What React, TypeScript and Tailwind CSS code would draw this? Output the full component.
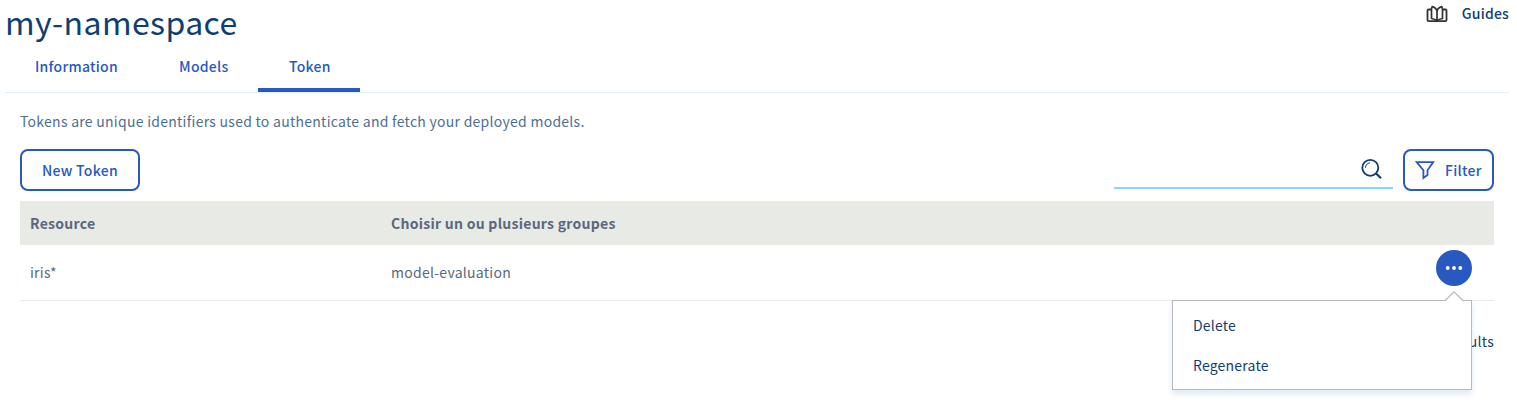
const tabs = [
  { label: 'Information', size: 'w-[143px] pl-[30px]', active: false },
  { label: 'Models', size: 'w-[110px] pl-[31px]', active: false },
  { label: 'Token', size: 'w-[102px] pl-[31px]', active: true },
];

function BookIcon() {
  return (
    <svg className="mt-px" width="22" height="18" viewBox="0 0 22 18" fill="none" stroke="#333" strokeWidth="1.8" strokeLinejoin="round">
      <path d="M5.500 4.500H2.600c-.7 0-1.100.4-1.100 1.100v9.500c0 .7.4 1.100 1.100 1.100h16.800c.7 0 1.100-.4 1.100-1.100v-9.500c0-.7-.4-1.100-1.100-1.100h-2.900" />
      <path d="M11 16.200V7c0-2.300-1.800-4.500-4.600-5.400-.5.700-.9 1.900-.9 2.900v9c2.500.3 4.300 1.200 5.500 2.700ZM11 16.200V7c0-2.300 1.800-4.500 4.600-5.400.5.700.9 1.900.9 2.900v9c-2.500.3-4.300 1.200-5.500 2.700Z" strokeWidth="1.700" />
    </svg>
  );
}

function SearchIcon() {
  return (
    <svg width="22" height="22" viewBox="0 0 22 22" fill="none" stroke="#0f3e70">
      <circle cx="10.300" cy="9.800" r="8" strokeWidth="1.800" />
      <path d="M5.500 9.700C5.500 7.200 7.300 5 10 4.900" strokeWidth="1" />
      <path d="M15.800 15.300l5.200 5" strokeWidth="2.200" />
    </svg>
  );
}

function FilterIcon() {
  return (
    <svg width="20" height="20" viewBox="0 0 20 20" fill="none" stroke="#2859c0" strokeWidth="1.800">
      <path d="M1.700 2.100h16.600l-5.800 8.100v4.800l-4.100 3v-7.800Z" />
    </svg>
  );
}

function Menu() {
  return (
    <div className="absolute top-[50px] right-0 h-[90px] w-[300px] border border-[#b8b9bb] bg-white pt-1 tracking-[0.2px] shadow-[0_4px_6px_rgba(40,110,192,0.15)]">
      <svg className="absolute -top-[10px] right-[7px]" width="20" height="11" viewBox="0 0 20 11">
        <path d="M1 11V10L10 1l9 9v1Z" fill="#fff" />
        <path d="M1 9.700L10 .9l9 8.800" fill="none" stroke="#b8b9bb" strokeWidth="1.200" />
      </svg>
      <button className="block h-10 w-full pl-5 text-left leading-10">Delete</button>
      <button className="block h-10 w-full pl-5 text-left leading-10">Regenerate</button>
    </div>
  );
}

export default function App() {
  return (
    <div className="h-[410px] w-full bg-white pr-2 pl-[5px] font-['Noto_Sans_CJK_SC',sans-serif] text-[14px] leading-6 tracking-[0.27px] text-[#0f3e70]">
      <header className="flex h-[46px] items-start justify-between">
        <h1 className="text-[32px] leading-[42px] tracking-[0.4px]">my-namespace</h1>
        <a className="flex items-center gap-[14px] pt-px font-medium tracking-[0.2px]">
          <BookIcon />
          Guides
        </a>
      </header>
      <nav className="flex h-[47px] border-b border-[#def1fb] font-medium text-[#2859c0]">
        {tabs.map((tab) => (
          <a
            key={tab.label}
            className={`${tab.size} h-[46px] border-b-4 leading-10 ${tab.active ? 'border-[#2859c0]' : 'border-transparent'}`}
          >
            {tab.label}
          </a>
        ))}
      </nav>
      <main className="pr-[15px] pl-[15px]">
        <p className="h-14 pt-4 text-[#4d7092]">
          Tokens are unique identifiers used to authenticate and fetch your deployed models.
        </p>
        <div className="flex h-[52px] items-start justify-between font-medium text-[#2859c0]">
          <button className="h-[42px] w-[120px] rounded-lg border-2 border-[#2859c0]">New Token</button>
          <div className="flex gap-[10px]">
            <div className="flex h-10 w-[279px] justify-end border-b-2 border-[#85d9fd] pt-[9px] pr-[11px]">
              <SearchIcon />
            </div>
            <button className="flex h-[42px] w-[91px] items-center gap-[10px] rounded-lg border-2 border-[#2859c0] pl-[10px]">
              <FilterIcon />
              Filter
            </button>
          </div>
        </div>
        <div className="grid h-11 grid-cols-[361px_1fr] items-center bg-[#e8eae5] pl-[10px] font-bold text-[#59687e]">
          <span>Resource</span>
          <span>Choisir un ou plusieurs groupes</span>
        </div>
        <div className="grid h-14 grid-cols-[361px_1fr_36px] border-b border-[#e8eae5] pr-[22px] pl-[10px] leading-[55px] text-[#59687e]">
          <span>iris*</span>
          <span>model-evaluation</span>
          <div className="relative mt-[5px] h-9 leading-6 text-[#0f3e70]">
            <button className="flex size-9 items-center justify-center rounded-full bg-[#2859c0]">
              <svg width="18" height="4" viewBox="0 0 18 4" fill="#fff">
                <circle cx="2.700" cy="2" r="1.900" />
                <circle cx="9" cy="2" r="1.900" />
                <circle cx="15.300" cy="2" r="1.900" />
              </svg>
            </button>
            <Menu />
          </div>
        </div>
        <p className="pt-7 text-right">1 results</p>
      </main>
    </div>
  );
}
